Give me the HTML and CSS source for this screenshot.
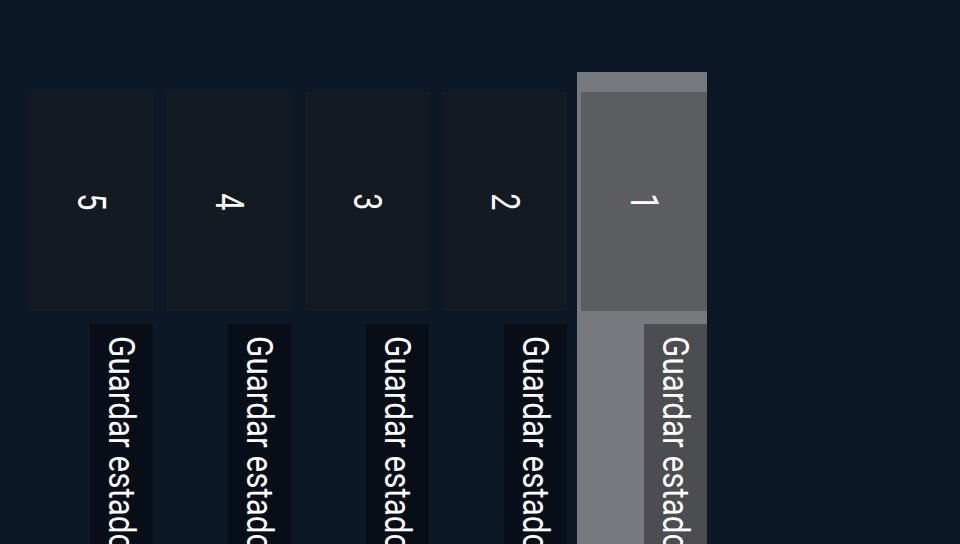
FILE: index.html
```html
<!DOCTYPE html>
<html lang="es">
<head>
<meta charset="utf-8">
<title>Guardar estado</title>
<link rel="stylesheet" href="styles.css">
</head>
<body>
<div class="row">
  <div class="item"><div class="card"><span class="num">5</span></div><div class="label"><span class="label-text">Guardar estado</span></div></div>
  <div class="item"><div class="card"><span class="num">4</span></div><div class="label"><span class="label-text">Guardar estado</span></div></div>
  <div class="item"><div class="card"><span class="num">3</span></div><div class="label"><span class="label-text">Guardar estado</span></div></div>
  <div class="item"><div class="card"><span class="num">2</span></div><div class="label"><span class="label-text">Guardar estado</span></div></div>
  <div class="item selected"><div class="card"><span class="num">1</span></div><div class="label"><span class="label-text">Guardar estado</span></div></div>
</div>
</body>
</html>
```
FILE: styles.css
```css
html, body {
  margin: 0;
  padding: 0;
}
body {
  width: 960px;
  height: 544px;
  overflow: hidden;
  background: #0c1825;
  font-family: Roboto, "Noto Sans", sans-serif;
  color: #ffffff;
}
.row {
  display: flex;
  align-items: flex-start;
  gap: 14px;
  padding: 72px 0 0 29px;
}
.item {
  display: flex;
  flex-direction: column;
  box-sizing: border-box;
  width: 124px;
  height: 472px;
  padding-top: 20px;
}
.card {
  height: 219px;
  background: #141a22;
  display: flex;
  align-items: center;
  justify-content: center;
}
.num {
  display: inline-block;
  writing-mode: vertical-rl;
  font-size: 38px;
  line-height: 1;
  transform: scaleY(0.8);
}
.label {
  align-self: flex-end;
  flex: 1;
  margin-top: 13px;
  width: 63px;
  box-sizing: border-box;
  padding-top: 12px;
  background: #070e17;
  writing-mode: vertical-rl;
  font-size: 37px;
  line-height: 63px;
  white-space: nowrap;
  overflow: hidden;
}
.label-text {
  display: inline-block;
  transform: scaleY(0.85);
  transform-origin: 50% 0;
}
.selected {
  width: 130px;
  margin-left: -4px;
  padding-left: 4px;
  background: #76797e;
}
.selected .card {
  background: #5c5d61;
}
.selected .label {
  background: #4b4d51;
}
```
